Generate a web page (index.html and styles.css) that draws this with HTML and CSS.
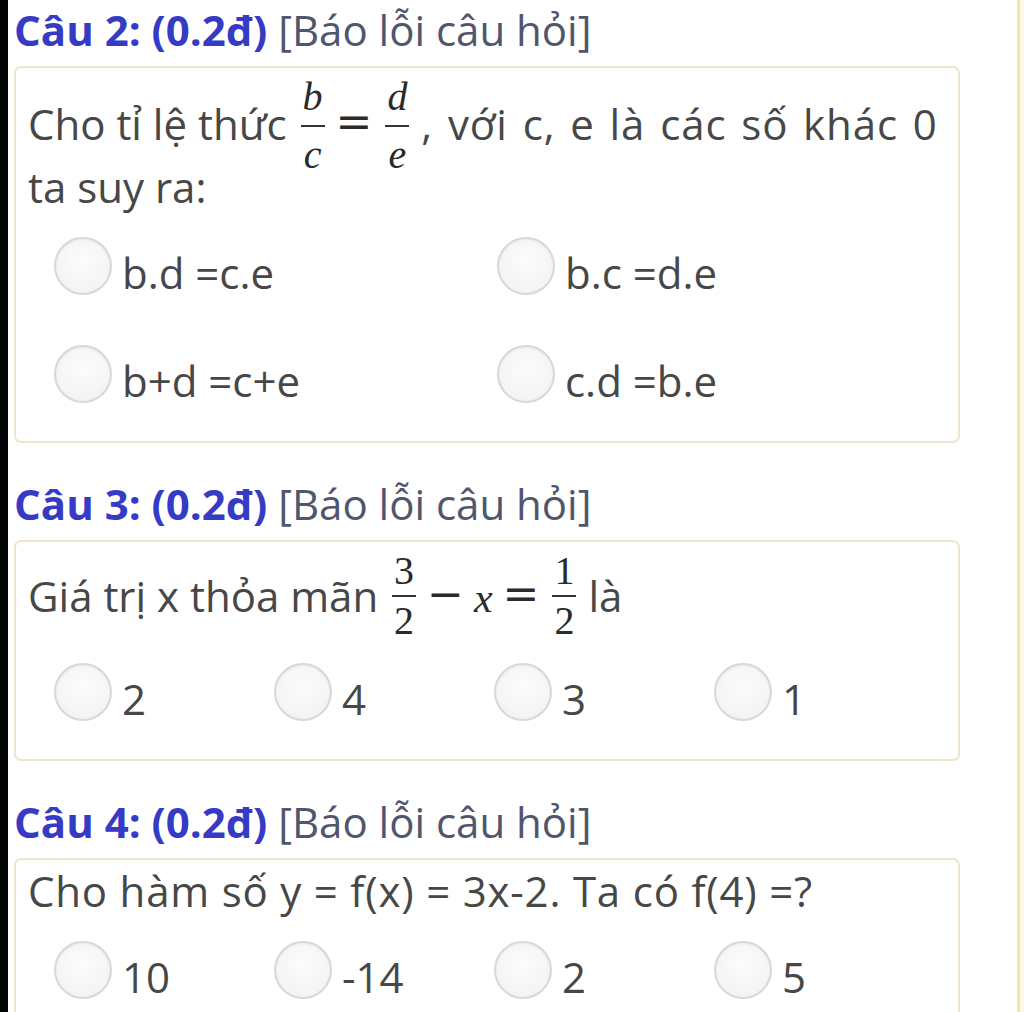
FILE: index.html
```html
<!DOCTYPE html>
<html lang="vi">
<head>
<meta charset="utf-8">
<title>Câu hỏi trắc nghiệm</title>
<link rel="stylesheet" href="styles.css">
</head>
<body>
<div class="page">
  <div class="edge"></div>
  <main class="content">
    <section class="question">
      <h2 class="q-title"><b class="q-num">Câu 2: (0.2đ)</b> <span class="q-report">[Báo lỗi câu hỏi]</span></h2>
      <div class="card">
        <p class="q-text">Cho tỉ lệ thức <span class="math"><span class="frac"><span class="num mi">b</span><span class="bar"></span><span class="den mi">c</span></span><span class="mo">=</span><span class="frac"><span class="num mi">d</span><span class="bar"></span><span class="den mi">e</span></span></span> <span class="wide">, với c, e là các số khác 0</span><br>ta suy ra:</p>
        <div class="options cols-2">
          <label class="opt"><span class="radio"></span><span class="opt-label">b.d =c.e</span></label>
          <label class="opt"><span class="radio"></span><span class="opt-label">b.c =d.e</span></label>
          <label class="opt"><span class="radio"></span><span class="opt-label">b+d =c+e</span></label>
          <label class="opt"><span class="radio"></span><span class="opt-label">c.d =b.e</span></label>
        </div>
      </div>
    </section>

    <section class="question">
      <h2 class="q-title"><b class="q-num">Câu 3: (0.2đ)</b> <span class="q-report">[Báo lỗi câu hỏi]</span></h2>
      <div class="card">
        <p class="q-text">Giá trị x thỏa mãn <span class="math"><span class="frac tight"><span class="num mn">3</span><span class="bar"></span><span class="den mn">2</span></span><span class="mo">−</span><span class="mi var">x</span><span class="mo">=</span><span class="frac tight"><span class="num mn">1</span><span class="bar"></span><span class="den mn">2</span></span></span> là</p>
        <div class="options cols-4">
          <label class="opt"><span class="radio"></span><span class="opt-label">2</span></label>
          <label class="opt"><span class="radio"></span><span class="opt-label">4</span></label>
          <label class="opt"><span class="radio"></span><span class="opt-label">3</span></label>
          <label class="opt"><span class="radio"></span><span class="opt-label">1</span></label>
        </div>
      </div>
    </section>

    <section class="question">
      <h2 class="q-title"><b class="q-num">Câu 4: (0.2đ)</b> <span class="q-report">[Báo lỗi câu hỏi]</span></h2>
      <div class="card">
        <p class="q-text spaced">Cho hàm số y = f(x) = 3x-2. Ta có f(4) =?</p>
        <div class="options cols-4">
          <label class="opt"><span class="radio"></span><span class="opt-label">10</span></label>
          <label class="opt"><span class="radio"></span><span class="opt-label">-14</span></label>
          <label class="opt"><span class="radio"></span><span class="opt-label">2</span></label>
          <label class="opt"><span class="radio"></span><span class="opt-label">5</span></label>
        </div>
      </div>
    </section>
  </main>
  <div class="rail"></div>
</div>
</body>
</html>
```

FILE: styles.css
```css
* { box-sizing: border-box; }

html, body {
  margin: 0;
  padding: 0;
  background: #ffffff;
  height: 100%;
  overflow: hidden;
}

body {
  font-family: "Open Sans", "Noto Sans", sans-serif;
  color: #474747;
}

.page {
  display: flex;
  min-height: 1012px;
}

.edge {
  width: 8px;
  flex: none;
  background: #050505;
}

.content {
  width: 1009px;
  flex: none;
  padding: 2px 0 0 6px;
  background: #fff;
}

.rail {
  flex: 1;
  border-left: 3px solid #f4e8a6;
  background: #fcf9ec;
}

.question {
  margin-bottom: 33px;
}

.q-title {
  margin: 0 0 8px;
  font-size: 42px;
  line-height: 56px;
  font-weight: 400;
  white-space: nowrap;
}

.q-num {
  font-weight: 700;
  color: #353bc4;
}

.q-report {
  color: #50566e;
}

.card {
  width: 946px;
  border: 2px solid #efe5cb;
  border-radius: 7px;
  background: #fff;
  padding: 11px 12px 38px 12px;
}

.q-text {
  margin: 0;
  font-size: 42px;
  line-height: 40px;
  color: #474747;
}

.q-text .wide {
  letter-spacing: 0.9px;
  word-spacing: 3px;
}

.q-text.spaced {
  letter-spacing: 0.8px;
}

/* math */
.math {
  white-space: nowrap;
}

.frac {
  display: inline-flex;
  flex-direction: column;
  align-items: center;
  vertical-align: 30px;
  margin: 0 1px -6px 3px;
  font-family: "Liberation Serif", "DejaVu Serif", serif;
  font-size: 40px;
  color: #2a2a2a;
}

.frac.tight {
  vertical-align: 28px;
}

.frac .num,
.frac .den {
  line-height: 36px;
  padding: 0 2px;
}

.frac .bar {
  align-self: stretch;
  height: 2px;
  background: #333;
  margin: 10px 0;
}

.frac.tight .bar {
  margin: 6px 0;
}

.mi {
  font-style: italic;
}

.mn {
  font-style: normal;
}

.var {
  font-family: "Liberation Serif", "DejaVu Serif", serif;
  font-size: 42px;
  color: #2a2a2a;
}

.mo {
  font-family: "DejaVu Serif", "Liberation Serif", serif;
  font-size: 44px;
  color: #2a2a2a;
  margin: 0 10px;
  display: inline-block;
  vertical-align: 3px;
}

/* options */
.options {
  display: grid;
  margin: 30px 0 0 26px;
  row-gap: 50px;
}

.cols-2 {
  grid-template-columns: 443px 443px;
}

.cols-4 {
  grid-template-columns: repeat(4, 220px);
}

.opt {
  display: flex;
  align-items: flex-start;
  gap: 10px;
}

.radio {
  flex: none;
  width: 58px;
  height: 58px;
  border-radius: 50%;
  border: 2px solid #d8d8d8;
  background: radial-gradient(circle at 50% 40%, #fcfcfc 0%, #f4f4f4 70%, #ececec 100%);
  box-shadow: inset 0 1px 2px rgba(0, 0, 0, 0.05);
}

.opt-label {
  margin-top: 16px;
  font-size: 42px;
  line-height: 40px;
  color: #474747;
  white-space: nowrap;
}
```
